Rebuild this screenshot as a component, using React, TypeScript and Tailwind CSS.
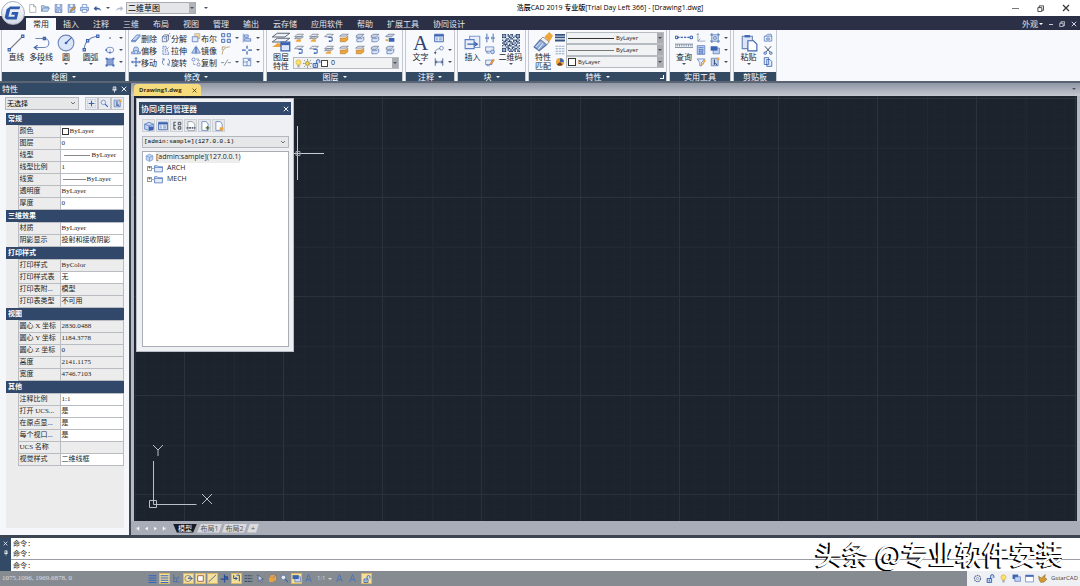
import type { ReactNode } from "react";

const B = "#3a62b0";
const L = "#c3d4f2";
const O = "#eda53c";

const icons: Record<string, ReactNode> = {
  newFile: <path d="M3 1h7l4 4v10H3zM10 1v4h4" fill="#fff" stroke="#7d8593" />,
  open: <path d="M1 13V3h5l1 2h6v2M1 13l3-6h11l-3 6z" fill={L} stroke="#3d6f99" />,
  save: <><path d="M2 1h12v14H2z" fill={L} stroke={B} /><path d="M5 1v5h6V1M4 9h8v6H4zM5 11h6M5 13h4" fill="#fff" stroke={B} /></>,
  saveAs: <><path d="M2 1h12v14H2z" fill={L} stroke={B} /><path d="M5 1v5h6V1" fill="#fff" stroke={B} /><path d="M6 14l1-4 6-5 2 2-6 5z" fill={O} stroke="#7b5a22" /></>,
  print: <><path d="M4 6V1h8v5" fill="#fff" stroke={B} /><path d="M1 6h14v6H1z" fill={L} stroke={B} /><path d="M4 10h8v5H4z" fill="#fff" stroke={B} /></>,
  undo: <path d="M1 8l5-5v3c5 0 8 2 9 7-2-3-5-4-9-3v3z" fill="#3e5f96" />,
  redo: <path d="M15 8l-5-5v3c-5 0-8 2-9 7 2-3 5-4 9-3v3z" fill="#b5bfd0" />,
  line: <><path d="M2 14L14 2" stroke="#777f8c" /><path d="M1 13h2v2H1zM13 1h2v2h-2z" fill="#fff" stroke={B} /></>,
  pline: <><path d="M3 4h8a4 4 0 0 1 0 8H2" stroke="#6f86b5" /><path d="M5 10l-3 2 3 2M10 3h2v2h-2z" stroke={B} /></>,
  circle: <><circle cx="8" cy="8" r="7" fill="#dbe6f8" stroke="#6f86b5" /><path d="M8 8l5-5" stroke={B} /><circle cx="8" cy="8" r="1.2" fill={B} /></>,
  arc: <><path d="M2 14C2 7 7 3 13 2" stroke="#6f86b5" /><path d="M1 13h2v2H1zM4 5h2v2H4zM13 1h2v2h-2z" fill="#fff" stroke={B} /></>,
  point: <circle cx="8" cy="8" r="1.2" fill="#30405c" />,
  ellipse: <><ellipse cx="8" cy="8" rx="6" ry="4.500" stroke={B} /><path d="M1 7h2v2H1zM7 11h2v2H7zM8 7v2" stroke={B} /></>,
  hatch: <><path d="M3 3h10v10H3z" fill="#86a1d2" stroke={B} /><path d="M1 1h3v3H1zM12 12h3v3h-3zM12 1h3v3h-3zM1 12h3v3H1z" fill={B} /></>,
  erase: <path d="M1 12l8-9h6l-8 9zM1 12v2h6v-2M7 14l8-9" fill={L} stroke={B} />,
  explode: <path d="M2 6h7v8H2zM2 6l3-3h7v8l-3 3M9 6l3-3M5 9h2M13 1l2-1M14 5h2" fill="#e6edf9" stroke="#3a4f7c" />,
  bool: <><path d="M6 1h8v8H6z" fill="#f7d99a" stroke="#98a2b5" /><path d="M2 6h9v8H2z" fill="#dfe9fa" stroke={B} /></>,
  offset: <path d="M1 14h14v-3h-3V7a4 4 0 0 0-8 0v4H1zM6 14V9h4v5" fill={L} stroke={B} />,
  stretch: <path d="M3 15V2h5l5 13zM7 6v6M5 4v1M10 6l3-3" fill="#e6edf9" stroke={B} strokeDasharray="3 1" />,
  mirror: <path d="M7 3v10H1zM9 3v10h6zM8 1v14" fill={L} stroke={B} />,
  move: <path d="M8 1v14M1 8h14M6 3l2-2 2 2M6 13l2 2 2-2M3 6L1 8l2 2M13 6l2 2-2 2" stroke={B} strokeWidth="1.6" />,
  rotate: <path d="M5 3a6 6 0 0 0 0 10M11 3a6 6 0 0 1 0 10M5 3v3M11 13v-3M5 3H2M11 13h3" stroke="#6f86b5" strokeWidth="1.500" />,
  copy: <><circle cx="4" cy="4" r="2.500" stroke={B} /><circle cx="12" cy="12" r="2.500" stroke={B} /><path d="M8 3h4v3M10 5l2 2 2-2M4 9v3h3" stroke="#777f8c" /></>,
  array: <path d="M1 1h5v5H1zM10 1h5v5h-5zM1 10h5v5H1zM10 10h5v5h-5z" fill="#e3ebfa" stroke={B} strokeWidth="1.400" />,
  align: <path d="M2 1v14M4 3h6v4H4zM4 9h10v4H4z" fill={L} stroke={B} />,
  fillet: <path d="M2 15C2 8 6 3 14 3M2 8V3h5" stroke="#a98f5c" strokeWidth="1.300" />,
  breakAt: <path d="M0 8h6M10 8h6M8 1v5M8 10v5" stroke={B} strokeWidth="2" />,
  trim: <path d="M0 9h5M11 9h5M5 14l6-10" stroke="#777f8c" strokeWidth="1.300" />,
  scale: <path d="M2 2h12v12H2zM2 8h6v6M8 8l4-4M9 4h3v3" fill="#f0f4fc" stroke={B} />,
  layerProps: <><path d="M1 4l4-3h10l-4 3zM1 8l4-3h10l-4 3z" fill="#edf1f8" stroke="#5b6473" strokeWidth=".8" /><path d="M1 12l4-3h10l-4 3z" fill={O} /><path d="M8 8h7v7H8z" fill="#dce7fb" stroke={B} /><path d="M8 9.500h7" stroke={B} strokeWidth="2" /></>,
  layerA: <><path d="M1 6l4-4h10l-4 4zM1 9l4-3h10l-4 3z" fill="#e8edf6" stroke="#5b6473" /><path d="M2 13l4-3h5v4H4z" fill={O} /></>,
  layerB: <><path d="M1 6l4-4h10l-4 4z" fill="#e8edf6" stroke="#5b6473" /><path d="M7 7h6v6H9" stroke={B} strokeWidth="1.600" /><circle cx="9" cy="13" r="1.500" fill={B} /></>,
  layerC: <><path d="M1 5l4-3h10l-4 3z" fill="#e8edf6" stroke="#5b6473" /><path d="M2 8h8l4-3v6l-4 3H2z" fill={O} stroke="#9c6a1d" strokeWidth=".8" /></>,
  layerD: <><path d="M2 4l4-2h8l-4 5H2z" fill={L} stroke="#5b6473" /><path d="M3 9h8l3-3v5l-3 3H3z" fill="#dfe6f3" stroke={B} /></>,
  layerE: <><path d="M1 6l4-4h10l-4 4z" fill={L} stroke="#5b6473" /><path d="M6 8h9v6H6z" fill={B} /><path d="M1 10h4v3H1z" fill={O} /></>,
  bulb: <><circle cx="8" cy="6" r="4.500" fill="#fbe36b" stroke="#d2a437" /><path d="M6 12h4M6 14h4" stroke="#555" /></>,
  sun: <><circle cx="8" cy="8" r="3.500" fill="#f3d44c" stroke="#6d6130" /><path d="M8 0v3M8 13v3M0 8h3M13 8h3M2 2l2 2M12 12l2 2M14 2l-2 2M4 12l-2 2" stroke="#454a3a" /></>,
  lock: <path d="M2 8h8v7H2zM8 8V4a3 3 0 0 1 6 0v3M6 10v3" fill={L} stroke="#2e57a3" strokeWidth="1.500" />,
  table: <><path d="M1 2h14v12H1z" fill="#e4ecfa" stroke={B} strokeWidth="1.400" /><path d="M1 4h14" stroke={B} strokeWidth="3" /><path d="M3 8h3M8 8h5M3 11h3M8 11h5" stroke={B} /></>,
  leader: <><path d="M2 14c0-6 2-8 8-8" stroke="#4b5770" /><circle cx="12" cy="5" r="3" stroke={B} /><path d="M0 11l2 4 2-4" fill="#4b5770" /></>,
  dim: <path d="M2 2v12M14 2v12M2 8h12M5 6L2 8l3 2M11 6l3 2-3 2" stroke="#35507f" strokeWidth="1.300" />,
  insert: <><path d="M5 2h9v10H5z" fill="#eaf0fb" stroke="#7f9bd0" /><path d="M1 5h8v8H1z" fill="#eaf0fb" stroke="#5d80c4" /><path d="M3 9h8M9 7l3 2-3 2" stroke={B} /></>,
  attr: <path d="M3 1v14M13 1v14M0 8h3M13 8h3M5 6v4M11 6v4M5 8h1M10 8h1" stroke={B} strokeWidth="1.400" />,
  blockA: <><path d="M1 3h13v7H1zM3 10v3h5" fill="#eaf0fb" stroke={B} /><circle cx="12" cy="11" r="3" fill={L} stroke={B} /></>,
  blockB: <><path d="M1 5h10v7H1zM3 12v2h5" fill="#eaf0fb" stroke={B} /><path d="M8 11l5-8 2 2-5 7z" fill={O} stroke="#b5522d" strokeWidth=".7" /></>,
  brush: <><path d="M1 12l5-6 5 4-6 5c-1-1-3-2-4-3z" fill="#8fabd8" stroke="#5874a8" /><path d="M6 6l2-2 5 4-2 2z" fill="#eef1f5" stroke="#888" strokeWidth=".7" /><path d="M9 4l4-4 3 3-3 5z" fill={O} /><path d="M2 12l4-4M4 14l4-5" stroke="#f4f7fc" strokeWidth=".7" /></>,
  weights: <path d="M0 3h16M0 7h16M0 12h16" stroke="#33527e" strokeWidth="3" />,
  types: <path d="M1 2h14M1 6h14M1 10h14M1 14h14" stroke="#5775a8" strokeDasharray="4 1" />,
  palette: <><circle cx="8" cy="8" r="6.500" fill={O} /><path d="M8 8V2a6 6 0 0 1 6 6z" fill="#3f66b0" /><path d="M8 8l-5 4a6 6 0 0 0 9 0z" fill="#6c4432" /></>,
  measure: <><path d="M2 3h12" stroke={B} strokeDasharray="2 1" /><circle cx="1.500" cy="3" r="1.200" stroke={B} /><circle cx="14.500" cy="3" r="1.200" stroke={B} /><path d="M0 9h16v3H0zM2 9v2M4 9v2M6 9v2M8 9v2M10 9v2M12 9v2M14 9v2" stroke="#7f8b9e" strokeWidth=".8" fill="#eef1f7" /></>,
  ucs: <path d="M3 1v12h12M3 13l4-4M1 3l2-2 2 2" stroke="#687d9f" />,
  group: <path d="M3 3h10v10H3zM0 3h3V0M16 3h-3V0M0 13h3v3M16 13h-3v3M6 6h4v4H6z" stroke={B} strokeWidth="1.300" />,
  calc: <><path d="M2 1h12v14H2z" fill={L} stroke={B} /><path d="M4 4h8M4 7h8M4 10h8M4 13h8M6 6v8M10 6v8" stroke={B} /></>,
  stack: <><path d="M5 5h10v9H5z" fill={L} stroke={B} /><path d="M1 2h11v7H1z" fill={B} /></>,
  filter: <><path d="M2 3h12l-5 6v5H6V9z" fill="#e4ecfa" stroke={B} /><path d="M9 12l5-8 2 1-5 8z" fill={O} /></>,
  select: <><path d="M2 2h11v12H2z" fill={L} stroke={B} /><path d="M7 4v8l2-2 2 3" stroke="#253a63" strokeWidth="1.500" /><path d="M11 1l4 4M15 1l-4 4" stroke={O} strokeWidth="2" /></>,
  paste: <><path d="M2 2h9v11H2z" fill="#dbe5f7" stroke="#6f86b5" /><path d="M4 1h5v2H4z" fill={B} /><path d="M7 6h5l3 3v6H7z" fill="#fff" stroke={B} /></>,
  cutBase: <path d="M2 5h12v8H2zM4 5l3-3h6l1 3M6 8h4v3H6z" fill="#e4ecfa" stroke={B} />,
  cut: <><path d="M3 2l8 9M13 2L5 11" stroke="#303f5e" strokeWidth="1.500" /><circle cx="3.500" cy="13" r="2" stroke={B} strokeWidth="1.500" /><circle cx="12.500" cy="13" r="2" stroke={B} strokeWidth="1.500" /></>,
  copyClip: <path d="M2 1h7v11H2zM6 4h5l3 3v8H6z" fill="#e4ecfa" stroke={B} strokeWidth="1.300" />,
  pick: <><path d="M8 3v10M3 8h10" stroke={B} strokeWidth="2" /><path d="M1 1h14v14H1z" stroke="#92a6cb" strokeDasharray="2 2" /></>,
  quick: <><circle cx="6" cy="6" r="4" fill="#e4ecfa" stroke={B} /><path d="M9 9l5 5" stroke={B} strokeWidth="2" /></>,
  sync: <><path d="M1 5l7-3 7 3v8l-7 2-7-2z" fill={L} stroke={B} /><path d="M1 5l7 3 7-3M8 8v7" stroke={B} /><path d="M8 9h7v6H8z" fill="#3a62b0" /></>,
  tree: <path d="M6 2H3v11h3M3 7h3M10 2h4v4h-4zM10 9h4v4h-4z" stroke="#3d4553" strokeWidth="1.500" />,
  docDwg: <><path d="M3 1h7l4 4v10H3z" fill="#fff" stroke="#727b8a" /><path d="M1 11h14" stroke="#5e6674" strokeWidth="3" strokeDasharray="3 1" /></>,
  docAdd: <><path d="M3 1h7l3 4v10H3z" fill="#fff" stroke={B} /><path d="M12 8v6M9 11h6" stroke="#51722c" strokeWidth="2" /></>,
  docLock: <><path d="M3 1h7l3 4v10H3z" fill="#fff" stroke={B} /><path d="M9 10h6v5H9z" fill={O} /></>,
  project: <><path d="M2 5l6-3 6 3v7l-6 3-6-3z" fill={L} stroke="#5d86c9" /><path d="M2 5l6 3 6-3M8 8v6" stroke="#5d86c9" /></>,
  folder: <path d="M1 14V3h5l2 2h7v9zM1 6h14" fill="#e4ecfa" stroke={B} strokeWidth="1.200" />,
  gridIcon: <path d="M1 3h14M1 7h14M1 11h14M1 15h14" stroke="#3564c4" strokeWidth="2" />,
  ortho: <path d="M3 1v13h11M8 14V7H3M11 4v5" stroke="#4565a5" strokeWidth="1.300" />,
  polar: <><circle cx="7" cy="8" r="5.500" stroke="#4d5c7c" /><path d="M7 8h8M7 8l5-4M12 6l3 2-3 2" stroke={B} strokeWidth="1.400" /></>,
  osnap: <path d="M3 3h10v10H3z" fill="#fff" stroke="#8e4439" strokeWidth="1.400" />,
  track: <path d="M1 14L14 2" stroke="#4f5e80" strokeWidth="1.500" />,
  dyn: <path d="M8 1v14M1 9h14M8 5h5v5" fill={B} stroke="#274d96" strokeWidth="2" />,
  cursor: <path d="M4 2v11l3-3 2 5 2-1-2-5h4zM1 1l2 2" fill="#c7d3e8" stroke="#34496f" />,
  swap: <path d="M3 2v6h6M6 5l3 3-3 3M8 2h5v11" stroke="#274d96" strokeWidth="1.700" />,
  lwt: <path d="M1 3h14M1 8h14M1 13h14" stroke="#3b506b" strokeWidth="2" strokeDasharray="5 1" />,
  cube: <><path d="M2 5h9v9H2z" fill={O} /><path d="M2 5l3-3h9l-3 3zM11 5l3-3v9l-3 3z" fill="#ffe0a1" stroke="#a85f20" /></>,
  anno: <path d="M8 1L3 14M8 1l5 13M5 10h6" stroke="#4b73bb" strokeWidth="1.700" />,
  gear: <><circle cx="8" cy="8" r="5.500" stroke="#607295" strokeWidth="2" strokeDasharray="3 1" /><circle cx="8" cy="8" r="2" stroke="#607295" /></>,
  windowIcon: <><path d="M1 2h14v12H1z" fill="#fff" stroke={B} /><path d="M1 3.500h14" stroke={B} strokeWidth="3" /></>,
  chats: <><path d="M1 1h10v8H1z" fill={B} /><path d="M5 5h10v8H5z" fill={L} stroke={B} /></>,
  bird: <path d="M1 4l5 3 7-6-1 6 4 2-5 5-6 1-3-5z" fill="#d39a32" stroke="#6f5426" strokeWidth=".8" />,
  pin: <path d="M5 2h6v7H5zM3 9h10M8 9v6M9 2v7" stroke="#fff" strokeWidth="1.600" />,
  first: <path d="M4 3v10M13 2v12L6 8z" fill="#fff" stroke="#fff" />,
  prev: <path d="M12 2v12L4 8z" fill="#fff" />,
  next: <path d="M4 2v12l8-6z" fill="#fff" />,
  last: <path d="M12 3v10M3 2v12l7-6z" fill="#fff" stroke="#fff" />,
};

const Icon = ({ name, className = "size-[11px]" }: { name: string; className?: string }) => (
  <svg viewBox="0 0 16 16" fill="none" className={`shrink-0 ${className}`} aria-hidden="true">
    {icons[name]}
  </svg>
);

const Caret = ({ className = "text-[#4a5262]" }: { className?: string }) => (
  <svg viewBox="0 0 4 2" className={`w-1 h-[2px] shrink-0 ${className}`} aria-hidden="true">
    <path d="M0 0h4L2 2z" fill="currentColor" />
  </svg>
);

const Close = ({ className = "size-[6px]" }: { className?: string }) => (
  <svg viewBox="0 0 8 8" className={className} fill="none" aria-hidden="true">
    <path d="M1 1l6 6M7 1L1 7" stroke="currentColor" strokeWidth="1.200" />
  </svg>
);

const Restore = ({ className = "size-[6px]" }: { className?: string }) => (
  <svg viewBox="0 0 8 8" className={className} fill="none" aria-hidden="true">
    <path d="M1 3h4.500v4.500H1zM2.500 3V1h5v5H5.500" stroke="currentColor" />
  </svg>
);

const BigButton = ({ icon, label, caret }: { icon: ReactNode; label: string; caret?: boolean }) => (
  <button className="flex flex-col items-center w-[25px] pt-[2px]">
    {icon}
    <span className="whitespace-nowrap">{label}</span>
    {caret && <span className="pt-[2px]"><Caret /></span>}
  </button>
);

const TallButton = ({ icon, lines }: { icon: string; lines: string[] }) => (
  <button className="flex flex-col items-center w-6">
    <Icon name={icon} className="size-5" />
    {lines.map((l) => (
      <span key={l} className="h-[9px]">{l}</span>
    ))}
  </button>
);

const SmallButton = ({ icon, label, caret }: { icon: string; label?: string; caret?: boolean }) => (
  <button aria-label={label ?? icon} className="flex items-center h-3">
    <Icon name={icon} className="size-[10px]" />
    {label && <span>{label}</span>}
    {caret && <span className="pl-1"><Caret /></span>}
  </button>
);

const Panel = ({ title, width, caret = true, corner, children }: { title: string; width: string; caret?: boolean; corner?: boolean; children: ReactNode }) => (
  <section className={`flex flex-col shrink-0 border-x border-[#c3c8d1] ${width}`}>
    <div className="flex flex-1 pt-[2px] px-[2px] text-[8px] leading-[9px] text-[#22252c]">{children}</div>
    <h2 className="relative h-[9px] flex items-center justify-center gap-1 bg-[#344a63] text-white text-[8px] leading-[9px]">
      {title}
      {caret && <Caret className="text-white" />}
      {corner && <span className="absolute right-[2px] size-1 border-r border-b border-white" />}
    </h2>
  </section>
);

const PropSelect = ({ label, pad, children }: { label: string; pad: string; children: ReactNode }) => (
  <div className="relative h-3 flex items-center">
    <select aria-label={label} className={`block appearance-none w-full h-3 border border-[#b6bac1] bg-[#f1f2f3] text-[6px] leading-[10px] ${pad}`}>
      <option>ByLayer</option>
    </select>
    <span className="absolute inset-y-0 left-[2px] flex items-center pointer-events-none">{children}</span>
    <span className="absolute right-px inset-y-px w-[6px] flex items-center justify-center bg-[#a9acb1] pointer-events-none"><Caret /></span>
  </div>
);

const tabs = ["插入", "注释", "三维", "布局", "视图", "管理", "输出", "云存储", "应用软件", "帮助", "扩展工具", "协同设计"];

type Row = [string, string, string?];
const groups: { title: string; rows: Row[] }[] = [
  {
    title: "常规",
    rows: [["颜色", "ByLayer", "swatch"], ["图层", "0"], ["线型", "ByLayer", "line"], ["线型比例", "1"], ["线宽", "ByLayer", "short"], ["透明度", "ByLayer"], ["厚度", "0"]],
  },
  { title: "三维效果", rows: [["材质", "ByLayer"], ["阴影显示", "投射和接收阴影"]] },
  { title: "打印样式", rows: [["打印样式", "ByColor", "off"], ["打印样式表", "无"], ["打印表附...", "模型", "off"], ["打印表类型", "不可用", "off"]] },
  {
    title: "视图",
    rows: [["圆心 X 坐标", "2830.0488", "off"], ["圆心 Y 坐标", "1184.3778", "off"], ["圆心 Z 坐标", "0", "off"], ["高度", "2141.1175", "off"], ["宽度", "4746.7103", "off"]],
  },
  {
    title: "其他",
    rows: [["注释比例", "1:1"], ["打开 UCS...", "是"], ["在原点显...", "是"], ["每个视口...", "是"], ["UCS 名称", "", "off"], ["视觉样式", "二维线框"]],
  },
];

const statusIcons: [string, boolean][] = [
  ["gridIcon", false], ["gridIcon", true], ["ortho", false], ["polar", true], ["osnap", true], ["track", true], ["dyn", false], ["swap", true],
  ["lwt", false], ["cursor", false], ["cube", false], ["quick", false], ["stack", true], ["anno", false],
];

// cells of the small code drawn on the 二维码 button
const qrCells = [
  "1110101100111", "1010110101101", "1110011010111", "0001101100010", "1011010011101", "0110111010110", "1101001101011",
  "0111010110100", "1010111001101", "0001100110010", "1110110101101", "1010101011010", "1110011101011",
];

const TitleBar = () => (
  <header className="flex items-center h-4 shrink-0 bg-white pl-7">
    <div className="flex items-center gap-[5px]">
      {["newFile", "open", "save", "saveAs", "print", "undo"].map((n) => (
        <button key={n} aria-label={n} className="w-[8px]"><Icon name={n} className="size-[9px]" /></button>
      ))}
      <Caret />
      <button aria-label="redo"><Icon name="redo" className="size-[9px]" /></button>
    </div>
    <div className="relative ml-[2px] w-[70px] h-3">
      <select aria-label="工作空间" className="block appearance-none w-full h-3 pl-px border border-[#a9adb3] bg-[#e4e5e7] text-[8px] leading-[10px]">
        <option>二维草图</option>
      </select>
      <span className="absolute right-px inset-y-px w-[6px] flex items-center justify-center bg-[#b1b4b9] pointer-events-none"><Caret /></span>
    </div>
    <span className="ml-2"><Caret /></span>
    <h1 className="flex-1 text-center text-[7px] font-medium text-black whitespace-nowrap">浩辰CAD 2019 专业版[Trial Day Left 366] - [Drawing1.dwg]</h1>
    <div className="flex items-center gap-[18px] pr-[10px] text-[#333]">
      <button aria-label="最小化" className="w-[7px] h-px bg-[#777]" />
      <button aria-label="还原"><Restore className="size-[7px]" /></button>
      <button aria-label="关闭"><Close className="size-[8px]" /></button>
    </div>
  </header>
);

const MenuBar = () => (
  <nav className="flex items-end h-[14px] shrink-0 bg-[#2b3046] pl-[26px] text-[8px] leading-3 text-[#e2e5ec]">
    <button className="h-3 px-[7px] bg-[#f7f9fc] text-[#22252c]">常用</button>
    {tabs.map((t) => (
      <button key={t} className="h-3 px-[7px] whitespace-nowrap">{t}</button>
    ))}
    <div className="ml-auto flex items-center gap-[6px] pr-[3px]">
      <button className="flex items-center gap-px">外观<Caret className="text-white" /></button>
      <button aria-label="最小化文档" className="w-1 h-px bg-[#c7cbd6]" />
      <button aria-label="还原文档"><Restore className="size-[6px]" /></button>
      <button aria-label="关闭文档"><Close className="size-[6px]" /></button>
    </div>
  </nav>
);

const Ribbon = () => (
  <div className="flex gap-[2px] h-[53px] shrink-0 bg-[#f7f9fc] border-b-2 border-[#5b6472] pl-px">
    <Panel title="绘图" width="w-[125px]">
      <BigButton icon={<Icon name="line" className="size-[18px]" />} label="直线" />
      <BigButton icon={<Icon name="pline" className="size-[18px]" />} label="多段线" caret />
      <BigButton icon={<Icon name="circle" className="size-[18px]" />} label="圆" caret />
      <BigButton icon={<Icon name="arc" className="size-[18px]" />} label="圆弧" caret />
      <div className="flex flex-col pl-[2px]">
        <SmallButton icon="point" caret />
        <SmallButton icon="ellipse" caret />
        <SmallButton icon="hatch" caret />
      </div>
    </Panel>
    <Panel title="修改" width="w-[136px]">
      <div className="grid grid-cols-[30px_30px_30px_21px_20px] grid-rows-[12px_12px_12px]">
        <SmallButton icon="erase" label="删除" />
        <SmallButton icon="explode" label="分解" />
        <SmallButton icon="bool" label="布尔" />
        <SmallButton icon="array" caret />
        <SmallButton icon="align" caret />
        <SmallButton icon="offset" label="偏移" />
        <SmallButton icon="stretch" label="拉伸" />
        <SmallButton icon="mirror" label="镜像" />
        <SmallButton icon="fillet" />
        <SmallButton icon="breakAt" caret />
        <SmallButton icon="move" label="移动" />
        <SmallButton icon="rotate" label="旋转" />
        <SmallButton icon="copy" label="复制" />
        <SmallButton icon="trim" caret />
        <SmallButton icon="scale" caret />
      </div>
    </Panel>
    <Panel title="图层" width="w-[137px]">
      <TallButton icon="layerProps" lines={["图层", "特性"]} />
      <div className="flex-1">
        <div className="grid grid-cols-7 pl-px">
          {["layerA", "layerA", "layerB", "layerC", "layerD", "layerD", "layerE", "layerB", "layerB", "layerA", "layerC", "layerC", "layerD", "layerD"].map((n, i) => (
            <SmallButton key={i} icon={n} />
          ))}
        </div>
        <div className="relative mt-px w-[106px] h-3">
          <select aria-label="图层" className="block appearance-none w-full h-3 pl-[37px] border border-[#b6bac1] bg-[#f1f2f3] text-[7px] leading-[10px]">
            <option>0</option>
          </select>
          <span className="absolute inset-y-0 left-px flex items-center pointer-events-none">
            <Icon name="bulb" className="size-[9px]" />
            <Icon name="sun" className="size-[9px]" />
            <Icon name="lock" className="size-[9px]" />
            <span className="size-[7px] bg-white border border-[#444]" />
          </span>
          <span className="absolute right-px inset-y-px w-[6px] flex items-center justify-center bg-[#a9acb1] pointer-events-none"><Caret /></span>
        </div>
      </div>
    </Panel>
    <Panel title="注释" width="w-[50px]">
      <BigButton icon={<span className="h-[18px] font-['Liberation_Serif',serif] text-[21px] leading-[18px] text-[#2d4270]">A</span>} label="文字" caret />
      <div className="flex flex-col pl-px">
        <SmallButton icon="table" />
        <SmallButton icon="leader" caret />
        <SmallButton icon="dim" caret />
      </div>
    </Panel>
    <Panel title="块" width="w-[69px]">
      <BigButton icon={<Icon name="insert" className="size-[18px]" />} label="插入" />
      <div className="flex flex-col">
        <SmallButton icon="attr" />
        <SmallButton icon="blockA" />
        <SmallButton icon="blockB" />
      </div>
      <div className="pl-[3px]">
        <BigButton
          icon={
            <svg viewBox="0 0 13 13" className="size-[18px]" aria-hidden="true">
              {qrCells.map((row, y) => row.split("").map((c, x) => c === "1" && <rect key={`${x}-${y}`} x={x} y={y} width="1" height="1" fill="#2c4775" />))}
            </svg>
          }
          label="二维码"
          caret
        />
      </div>
    </Panel>
    <Panel title="特性" width="w-[139px]" corner>
      <TallButton icon="brush" lines={["特性", "匹配"]} />
      <div className="flex flex-col">
        <SmallButton icon="weights" />
        <SmallButton icon="types" />
        <SmallButton icon="palette" />
      </div>
      <div className="flex-1 pl-px font-['Open_Sans',sans-serif]">
        <PropSelect label="线宽" pad="pl-[49px]"><span className="w-[46px] h-px bg-[#333]" /></PropSelect>
        <PropSelect label="线型" pad="pl-[49px]"><span className="w-[46px] h-px bg-[#777]" /></PropSelect>
        <PropSelect label="颜色" pad="pl-[11px]"><span className="size-2 bg-white border border-[#333]" /></PropSelect>
      </div>
    </Panel>
    <Panel title="实用工具" width="w-[62px]" caret={false}>
      <BigButton icon={<Icon name="measure" className="size-[18px]" />} label="查询" caret />
      <div className="grid grid-cols-[14px_18px] grid-rows-[12px_12px_12px]">
        <SmallButton icon="ucs" />
        <SmallButton icon="group" caret />
        <SmallButton icon="calc" />
        <SmallButton icon="stack" caret />
        <SmallButton icon="filter" />
        <SmallButton icon="select" caret />
      </div>
    </Panel>
    <Panel title="剪贴板" width="w-[44px]" caret={false}>
      <BigButton icon={<Icon name="paste" className="size-[18px]" />} label="粘贴" caret />
      <div className="flex flex-col pl-[2px]">
        <SmallButton icon="cutBase" />
        <SmallButton icon="cut" />
        <SmallButton icon="copyClip" />
      </div>
    </Panel>
  </div>
);

const Properties = () => (
  <aside className="flex flex-col w-[131px] shrink-0 bg-[#f5f7fb] border-r-2 border-[#3b4250]">
    <div className="flex items-center h-3 shrink-0 pl-[2px] pr-[2px] bg-[#324a66] text-white text-[8px] leading-3">
      <h2 className="flex-1">特性</h2>
      <button aria-label="固定"><Icon name="pin" className="size-[7px]" /></button>
      <button aria-label="关闭特性" className="ml-[3px]"><Close /></button>
    </div>
    <div className="flex items-center mt-[2px] pl-[5px] pr-[5px]">
      <div className="relative w-[74px] h-[13px] mr-[6px]">
        <select aria-label="选择对象" className="block appearance-none w-full h-[13px] pl-px border border-[#b4b8be] bg-[#e6e7e9] text-[7px] leading-[11px]">
          <option>无选择</option>
        </select>
        <svg viewBox="0 0 6 4" fill="none" className="absolute right-[3px] top-1 w-[6px] h-1 pointer-events-none"><path d="M1 1l2 2 2-2" stroke="#555" strokeWidth=".8" /></svg>
      </div>
      {["pick", "quick", "select"].map((n) => (
        <button key={n} aria-label={n} className="flex items-center justify-center size-[13px] border border-[#c0c4ca] bg-[#e9ebee]">
          <Icon name={n} className="size-[9px]" />
        </button>
      ))}
    </div>
    <div className="flex-1 mt-[3px] mb-[7px] ml-[6px] mr-[5px] bg-[#ececec] font-['Liberation_Serif','Noto_Sans_CJK_SC',serif] text-[7px] text-[#1d1d1d]">
      {groups.map((g) => (
        <table key={g.title} className="w-full table-fixed border-collapse">
          <caption className="h-3 pl-[2px] text-left leading-3 font-bold text-[7px] text-white bg-[#31486a]">{g.title}</caption>
          <tbody>
            {g.rows.map(([name, value, kind]) => (
              <tr key={name} className="h-3">
                <td className="w-3 p-0" />
                <th className="w-[42px] h-3 p-0 pl-px border border-[#b9bcc0] text-left font-normal leading-[11px] whitespace-nowrap overflow-hidden">{name}</th>
                <td className={`h-3 p-0 pl-px border border-[#b9bcc0] leading-[11px] whitespace-nowrap ${kind === "off" ? "bg-[#ececec]" : "bg-white"}`}>
                  <span className="flex items-center">
                    {kind === "swatch" && <span className="size-[7px] mr-px border border-[#333]" />}
                    {kind === "line" && <span className="w-[26px] h-px mx-[2px] bg-[#888]" />}
                    {kind === "short" && <span className="w-[23px] h-px mx-px bg-[#888]" />}
                    {value}
                  </span>
                </td>
              </tr>
            ))}
          </tbody>
        </table>
      ))}
    </div>
  </aside>
);

const ProjectManager = () => (
  <section className="absolute left-[2px] top-[2px] w-[158px] h-[254px] flex flex-col px-[3px] pt-[3px] pb-1 bg-[#eef0f4] border border-[#b8bdc7]">
    <div className="flex items-center h-[13px] -mx-px px-[2px] shrink-0 bg-[#31486a] text-white">
      <h2 className="flex-1 text-[8px] font-medium">协同项目管理器</h2>
      <button aria-label="关闭管理器"><Close /></button>
    </div>
    <div className="flex gap-px py-1 pl-[2px]">
      {["sync", "table", "tree", "docDwg", "docAdd", "docLock"].map((n) => (
        <button key={n} aria-label={n} className="flex items-center justify-center size-[13px] border border-[#cdd0d5] bg-[#e6e8eb]">
          <Icon name={n} className="size-[10px]" />
        </button>
      ))}
    </div>
    <div className="relative h-3 ml-[2px] mr-px shrink-0">
      <select aria-label="项目" className="block appearance-none w-full h-3 pl-px border border-[#b4b8be] bg-[#e6e7e9] font-['Liberation_Mono',monospace] text-[6px] leading-[10px]">
        <option>[admin:sample](127.0.0.1)</option>
      </select>
      <svg viewBox="0 0 6 4" fill="none" className="absolute right-[3px] top-1 w-[6px] h-1 pointer-events-none"><path d="M1 1l2 2 2-2" stroke="#555" strokeWidth=".8" /></svg>
    </div>
    <ul className="flex-1 mt-[3px] ml-[2px] mr-px pl-[2px] bg-white border border-[#a9adb4] font-['Open_Sans',sans-serif] text-[7px] text-[#1d1d1d]">
      <li className="flex items-center h-[11px] gap-[2px]">
        <Icon name="project" className="size-[9px]" />
        <span className="bg-[#ededed]">[admin:sample](127.0.0.1)</span>
      </li>
      {["ARCH", "MECH"].map((n) => (
        <li key={n} className="flex items-center h-[11px] pl-[2px]">
          <button aria-label={`展开 ${n}`} className="flex items-center justify-center size-[5px] border border-[#999] text-[5px] leading-none">+</button>
          <span className="w-[2px] h-px bg-[#aaa]" />
          <Icon name="folder" className="size-[9px]" />
          <span className="ml-1">{n}</span>
        </li>
      ))}
    </ul>
  </section>
);

const Canvas = () => (
  <div className="relative flex-1 mx-[3px] bg-[#1c232d] overflow-hidden">
    <svg className="absolute inset-0 size-full" fill="none" aria-hidden="true">
      <defs>
        <pattern id="minor" width="10" height="10" patternUnits="userSpaceOnUse">
          <path d="M0 .5h10M.5 0v10" stroke="#1e2530" />
        </pattern>
        <pattern id="major" x="50" y="2" width="99" height="99" patternUnits="userSpaceOnUse">
          <path d="M0 50.500h99M50.500 0v99" stroke="#222933" />
          <path d="M0 .5h99M.5 0v99" stroke="#2b323b" />
        </pattern>
      </defs>
      <rect width="100%" height="100%" fill="url(#minor)" />
      <rect width="100%" height="100%" fill="url(#major)" />
      <path d="M163.500 30v54M160 57.500h30" stroke="#c8cdd3" />
      <path d="M162 55.500h4v4h-4z" stroke="#9aa1aa" />
    </svg>
    <svg viewBox="0 0 80 80" className="absolute left-[14px] bottom-0 size-20" fill="none" aria-hidden="true">
      <path d="M1.500 59.500h7v7h-7zM5.500 20v43.500h43" stroke="#b9bfc7" />
      <path d="M5 4l5 5v6M15 4l-5 5M54 53l10 10M64 53L54 63" stroke="#b9bfc7" />
    </svg>
    <ProjectManager />
  </div>
);

const Workspace = () => (
  <main className="flex flex-col flex-1 min-w-0 bg-[#b4b9c3]">
    <div className="flex items-end h-[13px] shrink-0 pl-[3px] pr-1 bg-linear-to-b from-[#8f96a3] to-[#c5c9d1]">
      <div className="flex items-center justify-between w-[67px] h-3 pl-[5px] pr-1 rounded-t-[4px] bg-[#f6dc7d] text-[#3c2d10]">
        <span className="font-['Open_Sans',sans-serif] text-[6px] font-bold">Drawing1.dwg</span>
        <button aria-label="关闭图纸"><Close className="size-[5px]" /></button>
      </div>
      <span className="ml-auto mb-[6px]"><Caret /></span>
    </div>
    <Canvas />
    <div className="flex items-center h-[14px] shrink-0 pl-1 bg-[#a9adb8] text-[7px] leading-[9px]">
      <div className="flex items-center gap-1 w-[38px]">
        <button aria-label="第一个"><Icon name="first" className="size-[5px]" /></button>
        <button aria-label="上一个"><Icon name="prev" className="size-[5px]" /></button>
        <button aria-label="下一个"><Icon name="next" className="size-[5px]" /></button>
        <button aria-label="最后一个"><Icon name="last" className="size-[5px]" /></button>
      </div>
      <button className="w-6 h-[9px] bg-[#171b24] text-white [clip-path:polygon(0_0,100%_0,84%_100%,16%_100%)]">模型</button>
      <button className="w-[25px] h-[9px] bg-[#d9dbde] text-[#555] whitespace-nowrap [clip-path:polygon(16%_0,100%_0,88%_100%,0_100%)]">布局1</button>
      <button className="w-[25px] h-[9px] bg-[#d9dbde] text-[#555] whitespace-nowrap [clip-path:polygon(12%_0,100%_0,88%_100%,0_100%)]">布局2</button>
      <button aria-label="新建布局" className="w-3 h-[9px] bg-[#d9dbde] text-[#555] [clip-path:polygon(25%_0,100%_0,75%_100%,0_100%)]">+</button>
    </div>
  </main>
);

const CommandLine = () => (
  <div className="flex h-9 shrink-0 bg-white border-t-[3px] border-[#3d4553]">
    <div className="flex flex-col items-center gap-1 w-[11px] pt-[3px] bg-[#324a66] text-white">
      <button aria-label="关闭命令行"><Close className="size-[5px]" /></button>
      <button aria-label="固定命令行"><Icon name="pin" className="size-[6px]" /></button>
    </div>
    <div className="flex-1 pt-px font-['Liberation_Mono','Noto_Sans_CJK_SC',monospace] text-[7px] leading-[10px] text-[#222]">
      <p className="pl-[2px]">命令:</p>
      <p className="pl-[2px]">命令:</p>
      <label className="flex items-center h-[12px] pl-[2px] border-t border-[#9b9fa5]">
        命令:
        <input aria-label="命令" className="flex-1 h-[10px] outline-none" />
      </label>
    </div>
  </div>
);

const StatusBar = () => (
  <footer className="flex items-center h-[15px] shrink-0 pl-[2px] bg-[#868b92]">
    <span className="w-[145px] font-['Liberation_Serif',serif] text-[7px] text-[#dcdfe3]">1075.1096, 1969.6878, 0</span>
    <div className="flex items-center gap-px">
      {statusIcons.map(([n, on], i) => (
        <button key={i} aria-label={`${n} ${i}`} className={`flex items-center justify-center w-[11px] h-[11px] ${on ? "bg-[#f5df9d] border border-[#d9b763]" : ""}`}>
          <Icon name={n} className="size-[9px]" />
        </button>
      ))}
      <button className="flex items-center gap-[3px] px-[2px] text-[6px] text-[#d3d6da]">1:1<Caret className="text-[#d3d6da]" /></button>
      <button aria-label="注释可见性" className="w-3"><Icon name="anno" className="size-[9px]" /></button>
      <button aria-label="自动注释" className="w-3"><Icon name="anno" className="size-[9px]" /></button>
      <button aria-label="锁定" className="flex items-center justify-center size-[11px] bg-[#f5df9d] border border-[#d9b763]"><Icon name="lock" className="size-[8px]" /></button>
    </div>
    <div className="ml-auto flex items-center h-full pl-[6px] pr-[2px] gap-[3px] bg-[#eef0f4] text-[#444]">
      {["gear", "lock", "bulb", "chats", "windowIcon", "bird"].map((n) => (
        <button key={n} aria-label={`${n} 状态`} className="w-[10px]"><Icon name={n} className="size-[9px]" /></button>
      ))}
      <span className="text-[6px] font-['Open_Sans',sans-serif]">GstarCAD</span>
    </div>
  </footer>
);

export default function App() {
  return (
    <div className="relative flex flex-col h-screen overflow-hidden bg-[#f5f7fb] font-['Open_Sans','Noto_Sans_CJK_SC',sans-serif]">
      <TitleBar />
      <MenuBar />
      <Ribbon />
      <div className="flex flex-1 min-h-0">
        <Properties />
        <Workspace />
      </div>
      <CommandLine />
      <StatusBar />
      <button aria-label="应用程序菜单" className="absolute left-px top-px size-6 rounded-full bg-linear-to-b from-white to-[#d5dae5] border border-[#a5adbc]">
        <svg viewBox="0 0 24 24" className="size-full" fill="none" aria-hidden="true">
          <path d="M20 5H9L5 8 3 17l2 2h11l2-8h-7l-1 3h4l-.5 2H7l2-8h10z" fill="#2c5bb0" />
        </svg>
      </button>
      <p className="absolute right-4 bottom-[14px] font-['Noto_Sans_CJK_SC',sans-serif] text-[27px] leading-9 font-medium text-white whitespace-nowrap pointer-events-none [text-shadow:-1px_1px_0_#000,-2px_1px_0_#000]">
        头条 @专业软件安装
      </p>
    </div>
  );
}
